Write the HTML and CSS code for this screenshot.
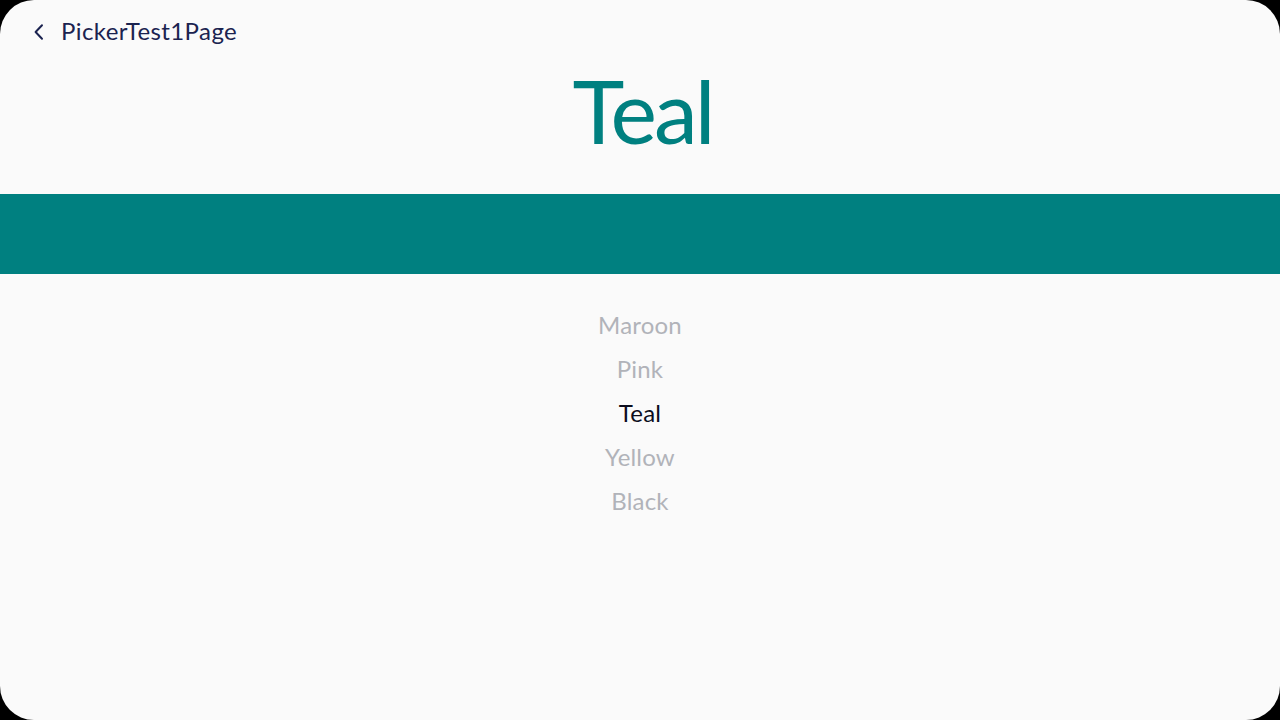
FILE: index.html
```html
<!DOCTYPE html>
<html>
<head>
<meta charset="utf-8">
<link rel="stylesheet" href="styles.css">
</head>
<body>
<div class="screen">
  <header class="appbar">
    <button class="back" aria-label="Back">
      <svg width="14" height="18" viewBox="0 0 14 18"><path d="M10 2.2 L3.6 9 L10 15.8" fill="none" stroke="#1b2350" stroke-width="2" stroke-linecap="round" stroke-linejoin="round"/></svg>
    </button>
    <span class="title">PickerTest1Page</span>
  </header>
  <div class="big">Teal</div>
  <div class="band"></div>
  <ul class="picker">
    <li>Maroon</li>
    <li>Pink</li>
    <li class="sel">Teal</li>
    <li>Yellow</li>
    <li>Black</li>
  </ul>
</div>
</body>
</html>
```
FILE: styles.css
```css
html, body { margin: 0; padding: 0; background: #000; }
body { width: 1280px; height: 720px; overflow: hidden; font-family: "Lato", "Noto Sans", sans-serif; }
.screen {
  width: 1280px; height: 720px; background: #fafafa;
  border-radius: 34px; overflow: hidden;
  display: flex; flex-direction: column;
}
.appbar {
  height: 64px; display: flex; align-items: center;
  padding: 0 0 2px 32px; box-sizing: border-box;
}
.back {
  border: 0; background: none; padding: 0; width: 14px; height: 18px;
  display: flex; align-items: center; justify-content: center; margin: 2px 15px 0 0;
}
.title { font-size: 24px; line-height: 24px; color: #1b2350; letter-spacing: 0.4px; }
.big {
  height: 130px; text-align: center; color: #008080;
  font-size: 88px; line-height: 92px; letter-spacing: -3px; padding-left: 5px;
}
.band { height: 80px; background: #008080; }
.picker {
  list-style: none; margin: 29px 0 0 0; padding: 0;
  display: flex; flex-direction: column; align-items: center;
}
.picker li {
  height: 44px; line-height: 44px; font-size: 24px; color: #b1b3b9; letter-spacing: 0.2px;
}
.picker li.sel { color: #0c0d1d; }
```
